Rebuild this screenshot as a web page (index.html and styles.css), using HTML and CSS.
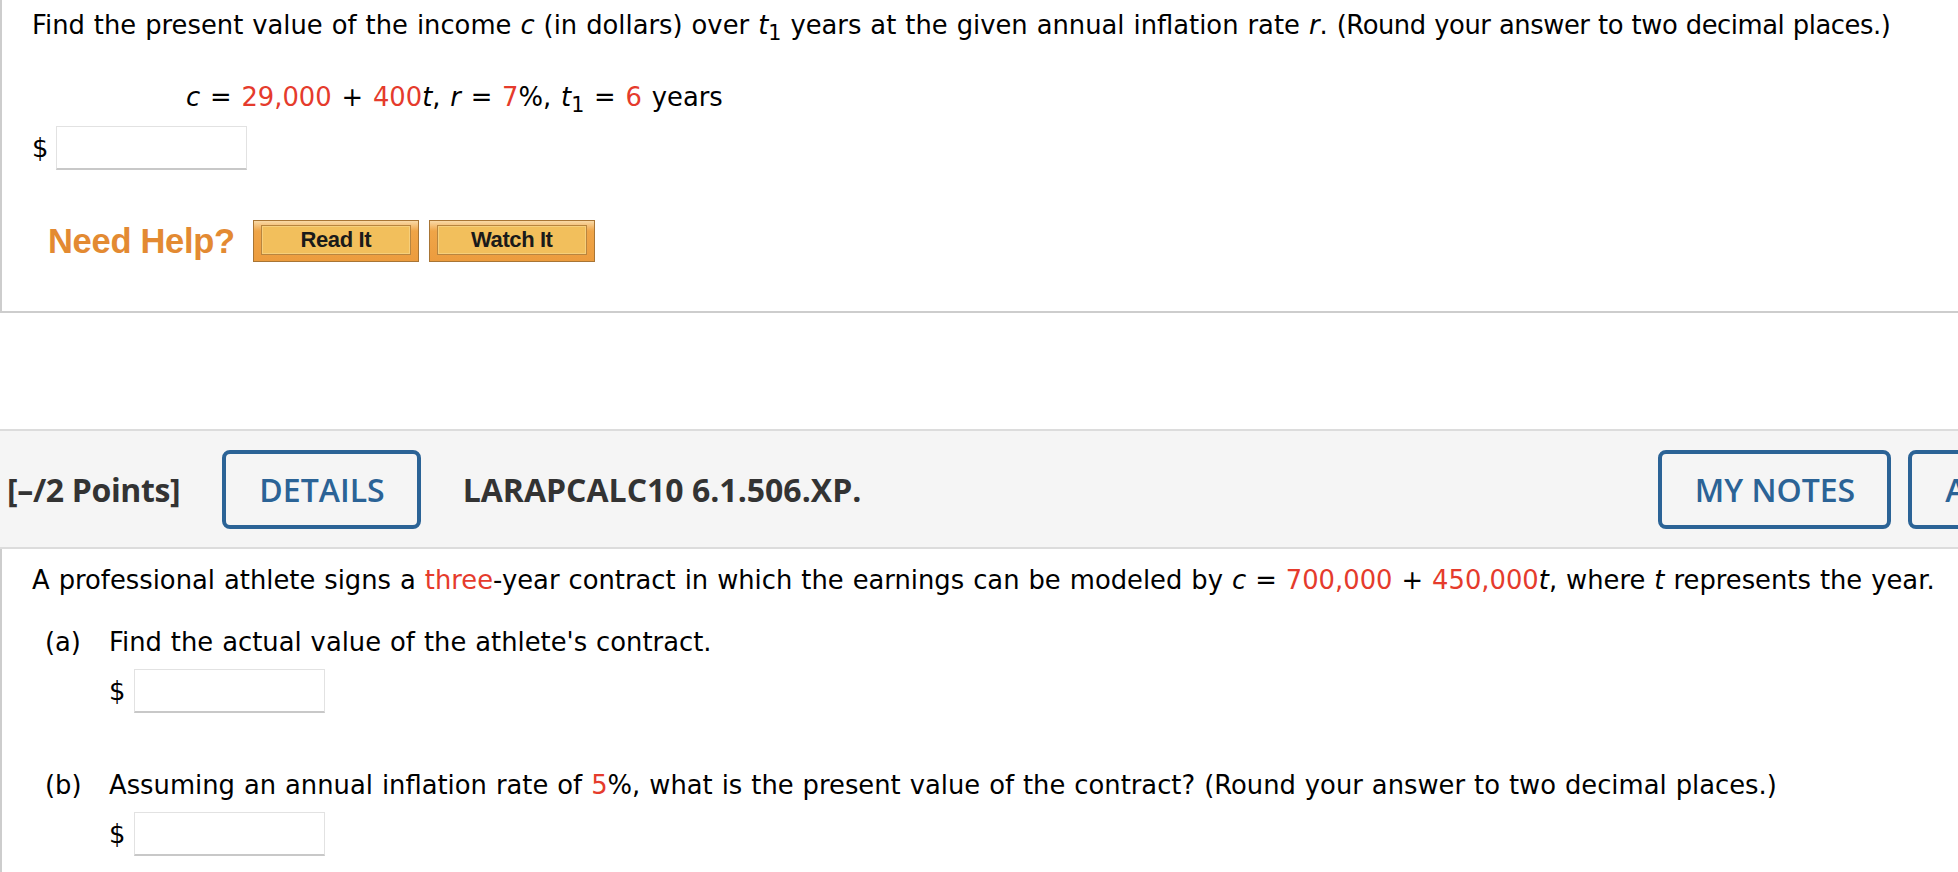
FILE: index.html
```html
<!DOCTYPE html>
<html lang="en">
<head>
<meta charset="utf-8">
<title>Question</title>
<link rel="stylesheet" href="styles.css">
</head>
<body>
<div class="page">
  <section class="panel panel-top">
    <p class="q">Find the present value of the income <i>c</i> (in dollars) over <i>t</i><sub>1</sub> years at the given annual inflation rate <i>r</i>. <span class="tail">(Round your answer to two decimal places.)</span></p>
    <p class="eq"><i>c</i> = <span class="red">29,000</span> + <span class="red">400</span><i>t</i>, <i>r</i> = <span class="red">7</span>%, <i>t</i><sub>1</sub> = <span class="red">6</span> years</p>
    <div class="answer"><span class="dollar">$</span><span class="input"></span></div>
    <div class="help">
      <span class="help-label">Need Help?</span>
      <span class="hbtn"><span class="hbtn-in">Read It</span></span>
      <span class="hbtn"><span class="hbtn-in">Watch It</span></span>
    </div>
  </section>

  <header class="qhead">
    <span class="points">[–/2 Points]</span>
    <span class="obtn">DETAILS</span>
    <span class="qid">LARAPCALC10 6.1.506.XP.</span>
    <span class="obtn notes">MY NOTES</span>
    <span class="obtn">ASK YOUR TEACHER</span>
  </header>

  <section class="panel panel-bottom">
    <p class="q">A professional athlete signs a <span class="red">three</span>-year contract in which the earnings can be modeled by <i>c</i> = <span class="red">700,000</span> + <span class="red">450,000</span><i>t</i>, where <i>t</i> represents the year.</p>
    <div class="part part-a">
      <p class="part-line"><span class="plabel">(a)</span><span>Find the actual value of the athlete's contract.</span></p>
      <div class="answer sub"><span class="dollar">$</span><span class="input"></span></div>
    </div>
    <div class="part part-b">
      <p class="part-line"><span class="plabel">(b)</span><span>Assuming an annual inflation rate of <span class="red">5</span>%, what is the present value of the contract? (Round your answer to two decimal places.)</span></p>
      <div class="answer sub"><span class="dollar">$</span><span class="input"></span></div>
    </div>
  </section>
</div>
</body>
</html>
```
FILE: styles.css
```css
html, body {
  margin: 0;
  padding: 0;
  background: #fff;
  overflow: hidden;
}
.page {
  width: 2295px;
  font-family: "DejaVu Sans", Verdana, sans-serif;
  font-size: 25.8px;
  word-spacing: 0.8px;
  color: #000;
}
p { margin: 0; white-space: nowrap; }
i { font-style: italic; }
sub {
  font-size: 0.8em;
  vertical-align: -0.3em;
  line-height: 0;
}
.red { color: #e53b2c; }
.tail { letter-spacing: -0.45px; }

.panel {
  border-left: 2px solid #cdcdcd;
  padding-left: 30px;
  line-height: 30px;
}
.panel-top {
  padding-top: 10px;
  padding-bottom: 49px;
  border-bottom: 2px solid #cdcdcd;
}
.eq {
  margin-top: 42px;
  padding-left: 154px;
  word-spacing: 1.6px;
}
.answer {
  display: flex;
  align-items: center;
  gap: 8px;
  margin-top: 14px;
}
.dollar { width: 16px; }
.input {
  display: block;
  width: 189px;
  height: 41px;
  border: 1px solid #e2e2e2;
  border-bottom: 2px solid #c8c8c8;
  background: #fff;
}
.help {
  display: flex;
  align-items: center;
  margin-top: 50px;
  padding-left: 16px;
  font-family: "Liberation Sans", Arial, sans-serif;
  word-spacing: 0;
}
.help-label {
  color: #e38a32;
  font-weight: bold;
  font-size: 34.5px;
  margin-right: 18px;
  letter-spacing: -0.3px;
}
.hbtn {
  display: block;
  box-sizing: border-box;
  width: 166px;
  height: 42px;
  padding: 4px 7px 6px;
  margin-right: 10px;
  background: linear-gradient(#f9d9a6 0, #efa548 25%, #ec9c3e 100%);
  border: 1px solid #a87535;
}
.hbtn-in {
  display: flex;
  align-items: center;
  justify-content: center;
  height: 100%;
  box-sizing: border-box;
  background: #f2bf5c;
  border: 1px solid #b8853f;
  box-shadow: inset 0 0 0 1px #f6cf7c;
  font-weight: bold;
  font-size: 22px;
  color: #1a1a1a;
  letter-spacing: -0.4px;
}

.qhead {
  display: flex;
  align-items: center;
  gap: 42px;
  box-sizing: border-box;
  height: 120px;
  margin-top: 116px;
  padding: 0 10px 0 7px;
  background: #f5f5f5;
  border-top: 2px solid #dcdcdc;
  border-bottom: 2px solid #dcdcdc;
  font-family: "Open Sans", sans-serif;
  font-size: 32px;
  word-spacing: 0;
  color: #333;
}
.points, .qid { font-weight: 700; }
.points { letter-spacing: -0.35px; }
.obtn {
  display: flex;
  align-items: center;
  box-sizing: border-box;
  height: 79px;
  padding: 0 32px 0 33px;
  border: 4px solid #2b6396;
  border-radius: 8px;
  color: #2b6396;
  font-weight: 600;
  white-space: nowrap;
}
.notes { margin-left: auto; margin-right: -25px; }

.panel-bottom {
  padding-top: 16px;
  height: 400px;
}
.part-a { margin-top: 32px; }
.part-b { margin-top: 57px; }
.part-line {
  display: flex;
  padding-left: 13px;
}
.plabel { width: 64px; }
.answer.sub {
  margin-top: 12px;
  padding-left: 77px;
  gap: 9px;
}
```
